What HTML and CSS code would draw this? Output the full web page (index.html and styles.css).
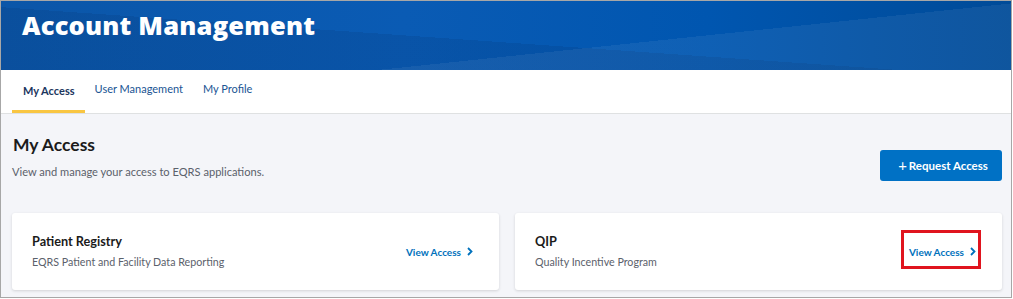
FILE: index.html
```html
<!DOCTYPE html>
<html>
<head>
<meta charset="utf-8">
<link rel="stylesheet" href="styles.css">
</head>
<body>
<div class="frame">
  <header class="banner">
    <h1 class="banner-title">Account Management</h1>
  </header>
  <nav class="tabs">
    <a class="tab active">My Access</a>
    <a class="tab">User Management</a>
    <a class="tab">My Profile</a>
  </nav>
  <main class="content">
    <div class="intro">
      <div class="intro-text">
        <h2 class="page-title">My Access</h2>
        <p class="page-sub">View and manage your access to EQRS applications.</p>
      </div>
      <button class="btn-primary"><span class="plus">+</span>Request Access</button>
    </div>
    <div class="cards">
      <div class="card">
        <div class="card-text">
          <div class="card-title">Patient Registry</div>
          <div class="card-sub">EQRS Patient and Facility Data Reporting</div>
        </div>
        <a class="view-link">View Access <svg class="chev" width="6" height="9" viewBox="0 0 6 9"><path d="M1 1 L4.5 4.5 L1 8" fill="none" stroke="#0071bc" stroke-width="1.8"/></svg></a>
      </div>
      <div class="card">
        <div class="card-text">
          <div class="card-title">QIP</div>
          <div class="card-sub">Quality Incentive Program</div>
        </div>
        <a class="view-link highlighted">View Access <svg class="chev" width="6" height="9" viewBox="0 0 6 9"><path d="M1 1 L4.5 4.5 L1 8" fill="none" stroke="#0071bc" stroke-width="1.8"/></svg></a>
      </div>
    </div>
  </main>
</div>
</body>
</html>
```

FILE: styles.css
```css
* { box-sizing: border-box; }
html, body { margin: 0; padding: 0; background: #ffffff; }
body { font-family: Lato, "Noto Sans", Arial, sans-serif; }

.frame {
  width: 1012px;
  height: 298px;
  border: 1px solid #a7a7a7;
  background: #f4f5f9;
  overflow: hidden;
}

.banner {
  height: 69px;
  padding: 6px 0 0 21px;
  background:
    linear-gradient(174deg, rgba(255,255,255,0) 0 62%, rgba(255,255,255,0.06) 62% 100%),
    linear-gradient(184deg, rgba(0,0,0,0) 0 55%, rgba(0,20,60,0.10) 55% 100%),
    linear-gradient(90deg, #0b56a8 0%, #0a5bb4 40%, #0056b0 70%, #004b98 100%);
}
.banner-title {
  margin: 0;
  color: #ffffff;
  font-family: "Open Sans", Lato, sans-serif;
  font-weight: 800;
  font-size: 25.5px;
  letter-spacing: 0.2px;
  line-height: 36px;
}

.tabs {
  height: 44px;
  background: #ffffff;
  border-bottom: 1px solid #dfe1e2;
  display: flex;
  padding-left: 11px;
}
.tab {
  display: flex;
  align-items: center;
  height: 43px;
  padding: 0 10px 3px;
  font-size: 11px;
  color: #205493;
  border-bottom: 3px solid transparent;
}
.tab.active {
  padding: 0 10px 0 11px;
  font-weight: 700;
  color: #1b365d;
  border-bottom-color: #f9c642;
}

.content {
  padding: 0 9px 0 11px;
}
.intro {
  display: flex;
  justify-content: space-between;
  align-items: flex-start;
  height: 99px;
}
.page-title {
  margin: 20px 0 0 1px;
  font-size: 17.5px;
  font-weight: 700;
  color: #1b1b1b;
  line-height: 22px;
}
.page-sub {
  margin: 9px 0 0 0;
  font-size: 11.1px;
  color: #5b616b;
  line-height: 14px;
}
.btn-primary {
  margin-top: 36px;
  width: 122px;
  height: 31px;
  border: 0;
  border-radius: 3px;
  background: #0071c5;
  color: #ffffff;
  font-family: inherit;
  font-size: 11.5px;
  font-weight: 700;
  display: flex;
  align-items: center;
  justify-content: center;
  padding: 0 0 0 4px;
}
.plus {
  font-size: 15px;
  font-weight: 400;
  margin-right: 2px;
  line-height: 1;
}

.cards {
  display: flex;
  gap: 16px;
}
.card {
  flex: 1;
  height: 77px;
  background: #ffffff;
  border-radius: 3px;
  box-shadow: 0 1px 3px rgba(0,0,0,0.14);
  display: flex;
  align-items: center;
  justify-content: space-between;
  padding: 0 26px 0 20px;
}
.card-title {
  font-size: 12.7px;
  font-weight: 700;
  color: #1b1b1b;
  line-height: 16px;
  margin-top: -2px;
}
.card-sub {
  font-size: 10.7px;
  color: #5b616b;
  line-height: 14px;
  margin-top: 6px;
}
.view-link {
  position: relative;
  font-size: 10px;
  font-weight: 700;
  color: #0071bc;
  display: flex;
  align-items: center;
  gap: 6px;
}
.chev { display: block; }
.view-link.highlighted::after {
  content: "";
  position: absolute;
  left: -8px;
  right: -5px;
  top: -16px;
  bottom: -11px;
  border: 3px solid #e0141e;
}
```
